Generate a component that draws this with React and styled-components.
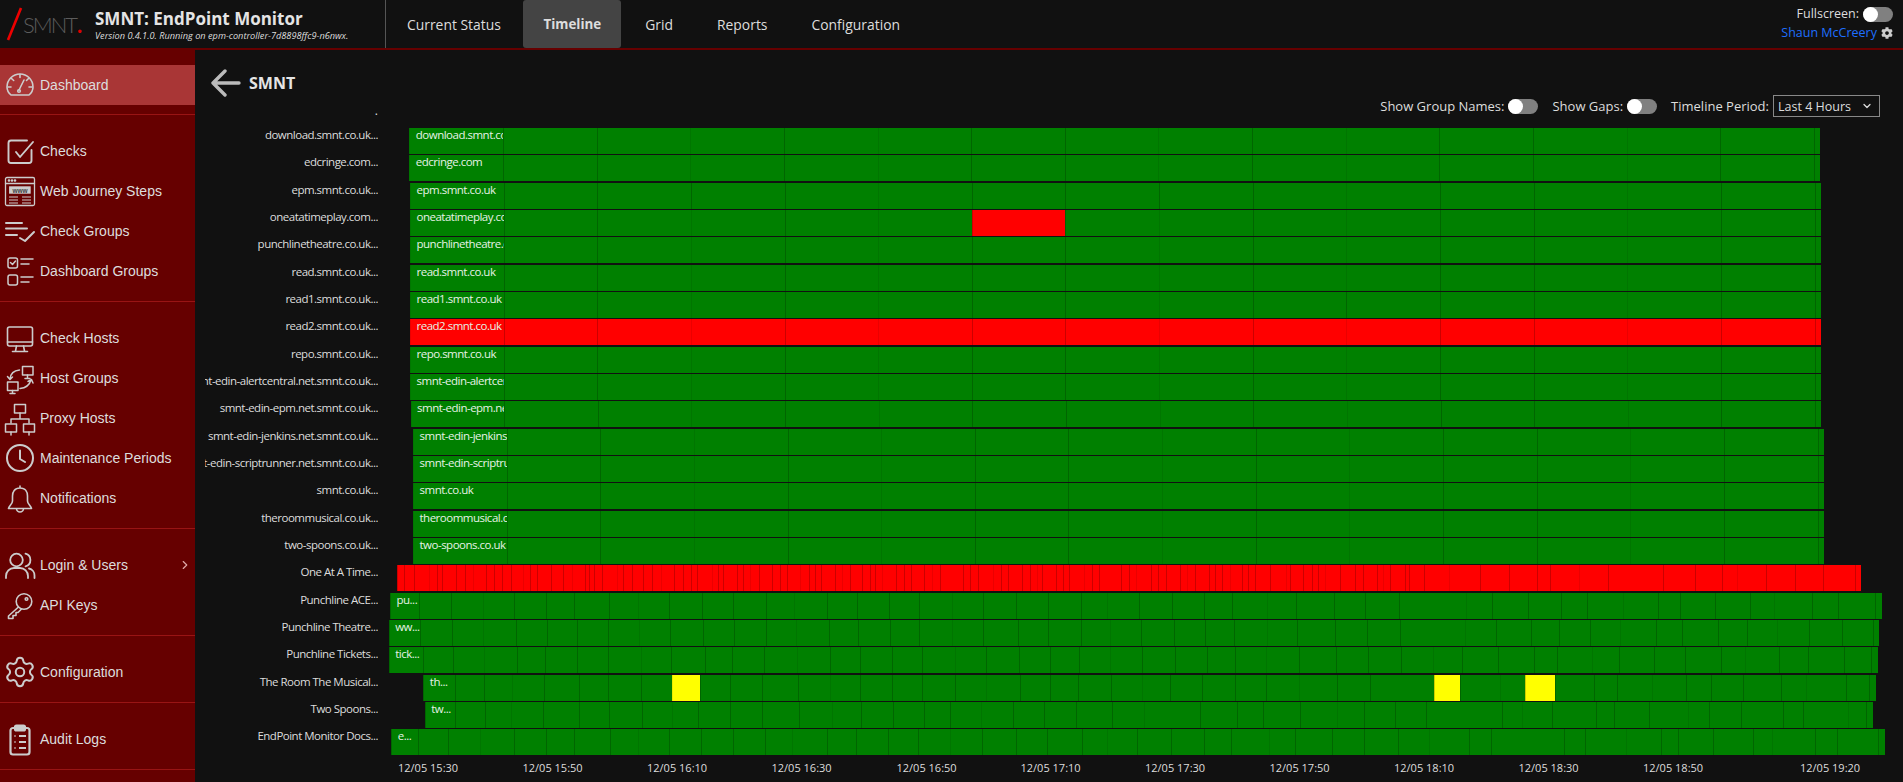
import React from "react";
import styled, { createGlobalStyle } from "styled-components";
import { FaCog } from "react-icons/fa";
import { ChevronDown, ChevronRight, Settings } from "lucide-react";

const UI_FONT = `"Open Sans", "Noto Sans", sans-serif`;

const GlobalStyle = createGlobalStyle`
  html, body {
    margin: 0;
    height: 100%;
    overflow: hidden;
    background: #111111;
    color: #dddddd;
    font-family: ${UI_FONT};
  }
`;

const Page = styled.div`
  height: 100vh;
  display: flex;
  flex-direction: column;
`;

const Header = styled.header`
  flex: 0 0 50px;
  box-sizing: border-box;
  display: flex;
  border-bottom: 2px solid #660000;
  background: #111111;
`;

const Brand = styled.div`
  flex: 0 0 385px;
  display: flex;
  align-items: center;
`;

const Logo = styled.div`
  flex: 0 0 95px;
  display: flex;
  align-items: center;
  height: 48px;
  padding-left: 6px;
  box-sizing: border-box;
  font-family: "Lato", sans-serif;
  font-weight: 300;
  font-size: 22px;
  letter-spacing: -2px;
  color: #5c5c5c;
`;

const LogoDot = styled.span`
  color: #dd0000;
  font-weight: 700;
  margin-left: 1px;
`;

const BrandText = styled.div`
  display: flex;
  flex-direction: column;
  margin-top: 1px;
`;

const AppTitle = styled.div`
  font-size: 17px;
  line-height: 22px;
  font-weight: 700;
  color: #e4e4e4;
`;

const AppVersion = styled.div`
  font-size: 9.2px;
  line-height: 12px;
  font-style: italic;
  color: #dddddd;
`;

const Tabs = styled.nav`
  display: flex;
  border-left: 1px solid #555555;
`;

const Tab = styled.div`
  display: flex;
  align-items: center;
  height: 48px;
  padding: 0 ${(p) => (p.$active ? "20px" : "22px")};
  margin: ${(p) => (p.$active ? "0 2px 0 0.5px" : "0")};
  font-size: ${(p) => (p.$active ? "13.4px" : "13.9px")};
  font-weight: ${(p) => (p.$active ? 700 : 400)};
  color: #dddddd;
  background: ${(p) => (p.$active ? "#444444" : "transparent")};
  border-radius: ${(p) => (p.$active ? "3px" : "0")};

  &:first-child {
    margin-left: -1px;
  }
`;

const UserBox = styled.div`
  margin-left: auto;
  padding: 5px 10px 0 0;
  display: flex;
  flex-direction: column;
  align-items: flex-end;
  gap: 1px;
  font-size: 12.5px;
  line-height: 18px;
`;

const UserRow = styled.div`
  display: flex;
  align-items: center;
  gap: 4px;
`;

const UserLink = styled.span`
  color: #1e6fff;
`;

const Toggle = styled.span`
  display: inline-flex;
  align-items: center;
  box-sizing: border-box;
  width: 30px;
  height: 15px;
  border-radius: 8px;
  background: #808080;

  &::before {
    content: "";
    width: 15px;
    height: 15px;
    border-radius: 50%;
    background: #ffffff;
  }
`;

const Body = styled.div`
  flex: 1;
  min-height: 0;
  display: flex;
`;

const Sidebar = styled.aside`
  flex: 0 0 195px;
  background: #660000;
  font-family: "Liberation Sans", Arial, sans-serif;
`;

const NavGroup = styled.div`
  padding: ${(p) => (p.$first ? "15px 0 9px" : "16px 0 10px")};
  border-bottom: 1px solid #991414;
`;

const NavItem = styled.div`
  height: 40px;
  display: flex;
  align-items: center;
  font-size: 14px;
  color: #dddddd;
  background: ${(p) => (p.$active ? "#a93636" : "transparent")};
`;

const NavIcon = styled.span`
  flex: 0 0 40px;
  height: 40px;
  display: flex;
  align-items: center;
  justify-content: center;
  color: #cccccc;

  svg {
    display: block;
    flex: none;
  }
`;

const NavCaret = styled.span`
  margin-left: auto;
  margin-right: 3px;
  display: flex;
  color: #e0a8a8;
`;

const Main = styled.main`
  flex: 1;
  min-width: 0;
  display: flex;
  flex-direction: column;
`;

const Heading = styled.div`
  margin-top: 21px;
  height: 24px;
  display: flex;
  align-items: center;
  gap: 8px;
  padding-left: 16px;
  font-size: 16px;
  font-weight: 700;
  color: #e4e4e4;
`;

const ToolBar = styled.div`
  height: 22px;
  display: flex;
  align-items: center;
  padding-right: 23px;
  font-size: 13px;
  color: #dddddd;
`;

const ClippedStub = styled.div`
  width: 183px;
  text-align: right;
  align-self: flex-end;
  font-size: 12px;
  line-height: 12px;
`;

const ToolGroup = styled.div`
  display: flex;
  align-items: center;
  gap: 4px;
  margin-left: ${(p) => (p.$first ? "auto" : "14px")};
`;

const PeriodSelect = styled.div`
  box-sizing: border-box;
  width: 107px;
  height: 22px;
  display: flex;
  align-items: center;
  justify-content: space-between;
  padding: 0 6px 0 4px;
  border: 1px solid #888888;
  font-size: 12.5px;
`;

const Chart = styled.div`
  margin-top: 11px;
  display: flex;
  flex-direction: column;
  gap: 1.33px;
`;

const Row = styled.div`
  height: 26px;
  display: flex;
`;

const RowLabel = styled.div`
  flex: 0 0 173px;
  margin-left: 10px;
  display: flex;
  justify-content: flex-end;
  overflow: hidden;
  white-space: nowrap;
  font-size: 11.5px;
  line-height: 14px;
  letter-spacing: -0.5px;
  color: #dddddd;
`;

const Bar = styled.div`
  height: 26px;
  display: flex;
  box-shadow: inset 0 0 0 1px rgba(0, 0, 0, 0.12);
`;

const COLORS = { g: "#008000", r: "#ff0000", y: "#ffff00" };

const Segment = styled.div`
  box-sizing: border-box;
  height: 26px;
  flex: none;
  overflow: hidden;
  white-space: nowrap;
  padding-left: ${(p) => (p.$labelled ? "5.5px" : "0")};
  font-size: 11.5px;
  line-height: 14px;
  letter-spacing: -0.5px;
  color: #e6f2e6;
  background: ${(p) => COLORS[p.$tone]};
  border-left: 1px solid rgba(0, 0, 0, ${(p) => (p.$faint ? 0.08 : 0.2)});
`;

const Axis = styled.div`
  margin-top: 5px;
  padding-left: 203px;
  display: flex;
  font-size: 11px;
  line-height: 16px;
  color: #dddddd;
`;

const AxisLabel = styled.div`
  flex: 0 0 ${(p) => p.$w}px;
  white-space: nowrap;
`;

// every nav icon is drawn on a 40x40 grid, same box as the icon column
function Glyph({ children, width = 1.6 }) {
  return (
    <svg width="40" height="40" viewBox="0 0 40 40" fill="none" stroke="currentColor" strokeWidth={width} strokeLinecap="round" strokeLinejoin="round">
      {children}
    </svg>
  );
}

const icons = {
  gauge: (
    <Glyph>
      <path d="M11 30C8.5 28 7 25 7 22A13 13 0 0 1 33 22C33 25 31.5 28 29 30Z" />
      <path d="M20 9.5V12.5M11.5 13.5L13.7 15.5M28.5 13.5L26.5 15.5M8 22H11M32 22H29M19 25L24 15" />
      <circle cx="19" cy="26" r="1.3" />
    </Glyph>
  ),
  checks: (
    <Glyph width={1.9}>
      <path d="M27 9.5H11A2.5 2.5 0 0 0 8.5 12V29.5A2.5 2.5 0 0 0 11 32H29A2.5 2.5 0 0 0 31.5 29.5V19" />
      <path d="M16 21L20 26L33 11" />
    </Glyph>
  ),
  web: (
    <Glyph width={1.3}>
      <rect x="5.5" y="6.5" width="29" height="28" rx="1.5" />
      <path d="M5.5 12.5H34.5" />
      <circle cx="9" cy="9.5" r="0.7" fill="currentColor" />
      <circle cx="12" cy="9.5" r="0.7" fill="currentColor" />
      <circle cx="15" cy="9.5" r="0.7" fill="currentColor" />
      <rect x="9" y="15" width="22" height="8" fill="#cccccc" stroke="#660000" strokeWidth="0.6" />
      <text x="20" y="21.5" textAnchor="middle" fontSize="6.5" fontWeight="700" fontFamily="Liberation Sans" fill="#444444" stroke="none">www</text>
      <path d="M9 26H18M22 26H31M9 29H18M22 29H31M9 32H18M22 32H31" strokeWidth="1" strokeLinecap="butt" />
    </Glyph>
  ),
  checkGroups: (
    <Glyph width={2}>
      <path d="M6 12H22M6 17.5H27M6 24H17" />
      <path d="M20 27L25 30L34 21" />
    </Glyph>
  ),
  dashGroups: (
    <Glyph width={1.5}>
      <rect x="8" y="7" width="9.5" height="10" rx="2" />
      <path d="M10.5 11.5L12.5 13.5L15.5 10" />
      <rect x="8" y="24" width="9.5" height="10" rx="2" />
      <path d="M21 8H33M21 13H29M21 26H33M21 31H29" />
    </Glyph>
  ),
  hosts: (
    <Glyph>
      <rect x="7.5" y="9" width="25" height="19" rx="2" />
      <path d="M7.5 24H32.5M16.5 28L15.5 33M23.5 28L24.5 33M12.5 33.5H27.5" />
    </Glyph>
  ),
  hostGroups: (
    <Glyph width={1.5}>
      <rect x="22.5" y="8.5" width="10.5" height="8.5" />
      <path d="M27.5 17V20M25 20.5H30" />
      <rect x="7.5" y="24" width="10.5" height="8.5" />
      <path d="M12.5 32.5V35M10 35.5H15" />
      <path d="M19.5 12C14 12.5 10.5 16 10 21M7.5 18.5L10 21.5L12.5 19" />
      <path d="M20 30.5C25.5 30 29.5 27 31 22M28 23.5L31.5 21.5L33 25" />
    </Glyph>
  ),
  proxy: (
    <Glyph width={1.5}>
      <rect x="14.5" y="6.5" width="11" height="8.5" />
      <path d="M20 15V21M11 25V21H29V25" />
      <rect x="5.5" y="26" width="11" height="8" />
      <path d="M11 34V37" />
      <rect x="23.5" y="26" width="11" height="8" />
      <path d="M29 34V37" />
    </Glyph>
  ),
  clock: (
    <Glyph width={2}>
      <circle cx="20" cy="20" r="13" />
      <path d="M20 12.5V21L25 24" />
    </Glyph>
  ),
  bell: (
    <Glyph>
      <path d="M20 10C14.5 10 12.5 14 12.5 18V23C12.5 26 9 28 8.5 30.5H31.5C31 28 27.5 26 27.5 23V18C27.5 14 25.5 10 20 10ZM20 8V10M16.5 30.5A3.5 3.5 0 0 0 23.5 30.5" />
    </Glyph>
  ),
  users: (
    <Glyph width={1.8}>
      <circle cx="16.5" cy="15" r="6.3" />
      <path d="M6 33V31A8 8 0 0 1 14 23H20A8 8 0 0 1 28 31V33" />
      <path d="M25.5 8.7A6.5 6.5 0 0 1 25.5 21.3M29 23.5A7 7 0 0 1 34.5 30.5V33" />
    </Glyph>
  ),
  key: (
    <Glyph width={1.6}>
      <circle cx="24" cy="16.5" r="7.8" />
      <circle cx="26.5" cy="14" r="1.3" />
      <path d="M18.5 22L8.5 31V33.5H13V30.5H16V27.5H18L21.5 24" />
    </Glyph>
  ),
  gear: <Settings size={34} strokeWidth={1.4} />,
  audit: (
    <Glyph width={2.2}>
      <rect x="10.5" y="9" width="19" height="26.5" rx="2.5" />
      <rect x="15" y="6.5" width="10" height="5" rx="1.5" fill="#cccccc" />
      <path d="M14.5 17H15.5M14.5 23H15.5M14.5 29H15.5M19 17H26M19 23H26M19 29H26" strokeLinecap="butt" />
    </Glyph>
  ),
};

const navGroups = [
  [{ label: "Dashboard", icon: "gauge", active: true }],
  [
    { label: "Checks", icon: "checks" },
    { label: "Web Journey Steps", icon: "web" },
    { label: "Check Groups", icon: "checkGroups" },
    { label: "Dashboard Groups", icon: "dashGroups" },
  ],
  [
    { label: "Check Hosts", icon: "hosts" },
    { label: "Host Groups", icon: "hostGroups" },
    { label: "Proxy Hosts", icon: "proxy" },
    { label: "Maintenance Periods", icon: "clock" },
    { label: "Notifications", icon: "bell" },
  ],
  [
    { label: "Login & Users", icon: "users", caret: true },
    { label: "API Keys", icon: "key" },
  ],
  [{ label: "Configuration", icon: "gear" }],
  [{ label: "Audit Logs", icon: "audit" }],
];

const tabs = ["Current Status", "Timeline", "Grid", "Reports", "Configuration"];

// chart rows start where this column ends
const TRACK_X = 378;
const STEP = 93.65;
const FAINT = [1, 4, 6, 9, 11, 14];

const hourly = (start, end, red = [], strong = []) => {
  const cuts = [];
  for (let k = 1; start + k * STEP < end; k++) cuts.push(start + k * STEP);
  return {
    start,
    end,
    cuts,
    faint: (i) => FAINT.includes(i + 1) && !strong.includes(i + 1),
    tone: (i) => (red.includes(i) ? "r" : "g"),
  };
};

const off = (base, list) => list.map((v) => base + v / 3);

const irregular = (start, end, cuts, tone = () => "g") => ({
  start,
  end,
  cuts,
  faint: (i) => i % 5 === 3,
  tone,
});

const allRed = Array.from({ length: 16 }, (_, i) => i);

const rows = [
  { label: "download.smnt.co.uk...", text: "download.smnt.co.uk", ...hourly(409.3, 1820) },
  { label: "edcringe.com...", text: "edcringe.com", ...hourly(409.3, 1820) },
  { label: "epm.smnt.co.uk...", text: "epm.smnt.co.uk", ...hourly(410, 1821, [], [4, 9]) },
  { label: "oneatatimeplay.com...", text: "oneatatimeplay.com", ...hourly(410, 1821, [6]) },
  { label: "punchlinetheatre.co.uk...", text: "punchlinetheatre.co.uk", ...hourly(410, 1821) },
  { label: "read.smnt.co.uk...", text: "read.smnt.co.uk", ...hourly(410, 1821) },
  { label: "read1.smnt.co.uk...", text: "read1.smnt.co.uk", ...hourly(410, 1821, [], [11]) },
  { label: "read2.smnt.co.uk...", text: "read2.smnt.co.uk", ...hourly(410, 1821, allRed) },
  { label: "repo.smnt.co.uk...", text: "repo.smnt.co.uk", ...hourly(410, 1821) },
  { label: "smnt-edin-alertcentral.net.smnt.co.uk...", text: "smnt-edin-alertcentral.net.smnt.co.uk", ...hourly(410, 1821) },
  { label: "smnt-edin-epm.net.smnt.co.uk...", text: "smnt-edin-epm.net.smnt.co.uk", ...hourly(410.5, 1821) },
  { label: "smnt-edin-jenkins.net.smnt.co.uk...", text: "smnt-edin-jenkins.net.smnt.co.uk", ...hourly(413, 1824) },
  { label: "smnt-edin-scriptrunner.net.smnt.co.uk...", text: "smnt-edin-scriptrunner.net.smnt.co.uk", ...hourly(413, 1824) },
  { label: "smnt.co.uk...", text: "smnt.co.uk", ...hourly(413, 1824) },
  { label: "theroommusical.co.uk...", text: "theroommusical.co.uk", ...hourly(413, 1824) },
  { label: "two-spoons.co.uk...", text: "two-spoons.co.uk", ...hourly(413, 1824) },
  {
    label: "One At  A Time...",
    ...irregular(
      397,
      1861.7,
      [
        ...off(190, [643, 673, 718, 740, 757, 798, 825, 848, 888, 913, 935, 962, 1000, 1020, 1042, 1082, 1118, 1145, 1185, 1197, 1213, 1235, 1280, 1300, 1325, 1358, 1385, 1413, 1453, 1478]),
        ...off(680, [32, 52, 95, 113, 130, 172, 190, 211, 236, 277, 302, 323, 362, 388, 407, 424, 467, 488, 512, 548, 572, 587, 608, 650, 672, 695, 734, 757, 782, 851, 871, 896, 940, 965, 986, 1028, 1052, 1072, 1087, 1130, 1150, 1168, 1214, 1238, 1258]),
        ...off(1100, [65, 88, 110, 155, 175, 199, 241, 263, 287, 329, 347, 367, 392, 428, 445, 467, 512, 560, 572, 611, 638, 656, 677, 722, 767, 790, 833, 851, 872, 917, 929, 974, 1049, 1142, 1229]),
        ...off(1500, [113, 152, 238, 325, 490, 585, 668, 713, 800, 886, 970, 1066]),
      ],
      () => "r"
    ),
  },
  {
    label: "Punchline ACE...",
    text: "pu...",
    ...irregular(390, 1881.7, [
      ...off(190, [688, 782, 878, 973, 1069, 1153, 1256, 1345, 1436]),
      ...off(680, [67, 160, 259, 343, 442, 532, 626, 718, 817, 910, 1009, 1103, 1202]),
      ...off(1100, [22, 118, 217, 313, 397, 502, 589, 701, 796, 896, 1099, 1177]),
      ...off(1500, [85, 184, 262, 370, 475, 541, 646, 751, 823, 937, 1015, 1126]),
    ]),
  },
  {
    label: "Punchline Theatre...",
    text: "ww...",
    ...irregular(388.7, 1879, [
      ...off(190, [691, 785, 878, 977, 1070, 1160, 1253, 1346, 1439]),
      ...off(680, [70, 163, 259, 347, 446, 533, 629, 718, 817, 910, 1015, 1103, 1202]),
      ...off(1100, [29, 122, 221, 316, 401, 500, 590, 704, 802, 899, 1094, 1187]),
      ...off(1500, [94, 176, 271, 361, 469, 547, 655, 742, 832, 928, 1025, 1120]),
    ]),
  },
  {
    label: "Punchline Tickets...",
    text: "tick...",
    ...irregular(388.7, 1877.7, [
      ...off(190, [698, 790, 883, 982, 1066, 1161, 1254, 1354, 1444]),
      ...off(680, [76, 157, 253, 352, 451, 541, 637, 727, 826, 919, 1018, 1111, 1196]),
      ...off(1100, [31, 127, 226, 322, 406, 499, 598, 709, 805, 904, 1000, 1087, 1195]),
      ...off(1500, [103, 172, 277, 358, 463, 556, 664, 736, 838, 925, 1033, 1114]),
    ]),
  },
  {
    label: "The Room The Musical...",
    text: "th...",
    ...irregular(
      423.3,
      1875.7,
      [
        ...off(190, [796, 883, 967, 1061, 1168, 1255, 1354, 1447]),
        ...off(680, [60, 151, 247, 355, 451, 541, 637, 727, 826, 919, 1021, 1111, 1195]),
        ...off(1100, [34, 127, 211, 307, 406, 499, 598, 712, 811, 1003, 1081, 1201, 1276]),
        ...off(1500, [165, 283, 352, 457, 559, 634, 730, 844, 919, 1039, 1108]),
      ],
      // the three yellow blocks, counted from the bar's left edge
      (i) => ([8, 31, 34].includes(i) ? "y" : "g")
    ),
  },
  {
    label: "Two Spoons...",
    text: "tw...",
    ...irregular(424.7, 1872.7, [
      ...off(190, [796, 886, 964, 1060, 1168, 1258, 1357, 1447]),
      ...off(680, [55, 151, 247, 358, 457, 544, 640, 733, 811, 904, 1000, 1093, 1189]),
      ...off(1100, [37, 133, 301, 412, 490, 601, 712, 793, 886, 979, 1207, 1267]),
      ...off(1500, [157, 289, 343, 448, 565, 628, 724, 850, 910, 1045, 1099]),
    ]),
  },
  {
    label: "EndPoint Monitor Docs...",
    text: "e...",
    ...irregular(391.3, 1885, [
      ...off(190, [685, 775, 871, 973, 1069, 1153, 1261, 1345, 1436]),
      ...off(680, [64, 160, 256, 337, 442, 529, 625, 715, 811, 907, 1009, 1102, 1207]),
      ...off(1100, [22, 112, 214, 313, 394, 508, 586, 697, 793, 895, 988, 1108, 1174]),
      ...off(1500, [193, 256, 379, 484, 535, 640, 760, 817, 946, 1012, 1135]),
    ]),
  },
];

const ticks = [
  ["12/05 15:30", 124.5],
  ["12/05 15:50", 124.5],
  ["12/05 16:10", 124.5],
  ["12/05 16:30", 125],
  ["12/05 16:50", 124],
  ["12/05 17:10", 124.5],
  ["12/05 17:30", 124.5],
  ["12/05 17:50", 124.5],
  ["12/05 18:10", 124.5],
  ["12/05 18:30", 124.5],
  ["12/05 18:50", 157],
  ["12/05 19:20", 80],
];

function TimelineRow({ row }) {
  const edges = [row.start, ...row.cuts, row.end];
  return (
    <Row>
      <RowLabel>{row.label}</RowLabel>
      <Bar style={{ marginLeft: row.start - TRACK_X }}>
        {edges.slice(1).map((edge, i) => (
          <Segment key={i} $tone={row.tone(i)} $faint={row.faint(i)} $labelled={i === 0 && row.text} style={{ width: edge - edges[i] }}>
            {i === 0 ? row.text : null}
          </Segment>
        ))}
      </Bar>
    </Row>
  );
}

export default function App() {
  return (
    <Page>
      <GlobalStyle />
      <Header>
        <Brand>
          <Logo>
            <svg width="17" height="36" viewBox="0 0 17 36" fill="none">
              <path d="M2 34L15 2" stroke="#ee0000" strokeWidth="2.6" />
            </svg>
            SMNT<LogoDot>.</LogoDot>
          </Logo>
          <BrandText>
            <AppTitle>SMNT: EndPoint Monitor</AppTitle>
            <AppVersion>Version 0.4.1.0. Running on epm-controller-7d8898ffc9-n6nwx.</AppVersion>
          </BrandText>
        </Brand>
        <Tabs>
          {tabs.map((tab) => (
            <Tab key={tab} $active={tab === "Timeline"}>
              {tab}
            </Tab>
          ))}
        </Tabs>
        <UserBox>
          <UserRow>
            Fullscreen: <Toggle />
          </UserRow>
          <UserRow>
            <UserLink>Shaun McCreery</UserLink>
            <FaCog size={12} color="#cccccc" />
          </UserRow>
        </UserBox>
      </Header>
      <Body>
        <Sidebar>
          {navGroups.map((group, g) => (
            <NavGroup key={g} $first={g === 0}>
              {group.map((item) => (
                <NavItem key={item.label} $active={item.active}>
                  <NavIcon>{icons[item.icon]}</NavIcon>
                  {item.label}
                  {item.caret && (
                    <NavCaret>
                      <ChevronRight size={14} />
                    </NavCaret>
                  )}
                </NavItem>
              ))}
            </NavGroup>
          ))}
        </Sidebar>
        <Main>
          <Heading>
            <svg width="30" height="28" viewBox="0 0 30 28" fill="none" stroke="#bbbbbb" strokeWidth="3.4" strokeLinecap="round" strokeLinejoin="round">
              <path d="M2 14H28M14 2L2 14L14 26" />
            </svg>
            SMNT
          </Heading>
          <ToolBar>
            <ClippedStub>.</ClippedStub>
            <ToolGroup $first>
              Show Group Names: <Toggle />
            </ToolGroup>
            <ToolGroup>
              Show Gaps: <Toggle />
            </ToolGroup>
            <ToolGroup>
              Timeline Period:
              <PeriodSelect>
                Last 4 Hours
                <ChevronDown size={12} strokeWidth={2.5} />
              </PeriodSelect>
            </ToolGroup>
          </ToolBar>
          <Chart>
            {rows.map((row) => (
              <TimelineRow key={row.label} row={row} />
            ))}
          </Chart>
          <Axis>
            {ticks.map(([text, w]) => (
              <AxisLabel key={text} $w={w}>
                {text}
              </AxisLabel>
            ))}
          </Axis>
        </Main>
      </Body>
    </Page>
  );
}
